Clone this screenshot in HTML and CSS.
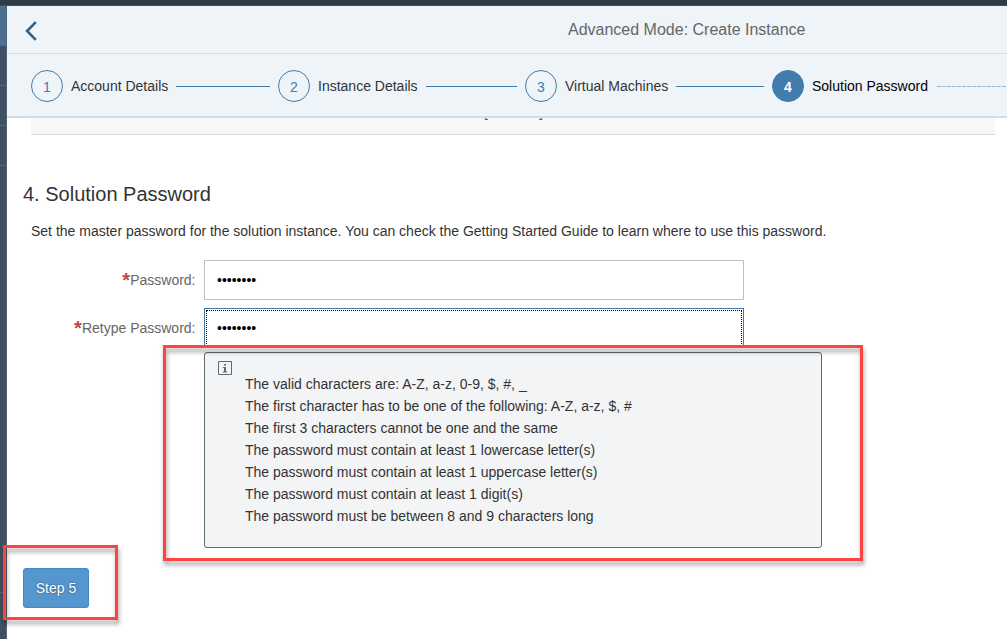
FILE: index.html
```html
<!DOCTYPE html>
<html lang="en">
<head>
<meta charset="utf-8">
<title>Advanced Mode: Create Instance</title>
<link rel="stylesheet" href="styles.css">
</head>
<body>
<div class="shell-bar"></div>
<div class="shell">
  <nav class="side">
    <div class="side-item active"></div>
    <div class="side-item"></div>
    <div class="side-item"></div>
    <div class="side-item"></div>
    <div class="side-space"></div>
    <div class="side-item last"></div>
  </nav>
  <main class="page">
    <header class="page-header">
      <svg class="back" width="14" height="20" viewBox="0 0 14 20"><path d="M11.8 1.2 3.1 10l8.7 8.8" fill="none" stroke="#346187" stroke-width="2.6"/></svg>
      <h1>Advanced Mode: Create Instance</h1>
    </header>
    <ol class="steps">
      <li class="step"><span class="num">1</span><span class="name">Account Details</span><span class="line"></span></li>
      <li class="step"><span class="num">2</span><span class="name">Instance Details</span><span class="line"></span></li>
      <li class="step"><span class="num">3</span><span class="name">Virtual Machines</span><span class="line"></span></li>
      <li class="step current"><span class="num">4</span><span class="name">Solution Password</span><span class="line"></span></li>
    </ol>
    <div class="strip"><span>[</span><span>]</span></div>
    <section class="content">
      <h2>4. Solution Password</h2>
      <p class="intro">Set the master password for the solution instance. You can check the Getting Started Guide to learn where to use this password.</p>
      <div class="row"><label><b>*</b>Password:</label><div class="field">••••••••</div></div>
      <div class="row"><label><b>*</b>Retype Password:</label><div class="field focus">••••••••</div></div>
      <div class="info">
        <svg class="info-icon" width="14" height="14" viewBox="0 0 14 14"><path d="M.5.5h13v13H.5z" fill="none" stroke="#5d6a70"/><path d="M6 3h2v1.6H6zM5 6h3v4.4h1.2v1.1H4.8v-1.1H6V7H5z" fill="#5d6a70"/></svg>
        <ul>
          <li>The valid characters are: A-Z, a-z, 0-9, $, #, _</li>
          <li>The first character has to be one of the following: A-Z, a-z, $, #</li>
          <li>The first 3 characters cannot be one and the same</li>
          <li>The password must contain at least 1 lowercase letter(s)</li>
          <li>The password must contain at least 1 uppercase letter(s)</li>
          <li>The password must contain at least 1 digit(s)</li>
          <li>The password must be between 8 and 9 characters long</li>
        </ul>
      </div>
      <button class="next">Step 5</button>
    </section>
  </main>
</div>
<div class="mark mark-info"></div>
<div class="mark mark-next"></div>
</body>
</html>
```

FILE: styles.css
```css
* { box-sizing: border-box; }
body {
  margin: 0;
  width: 1007px;
  height: 639px;
  overflow: hidden;
  position: relative;
  background: #fff;
  font: 14px/20px "Liberation Sans", Arial, sans-serif;
  color: #333;
}
h1, h2, p, ol, ul { margin: 0; padding: 0; font-weight: normal; list-style: none; }
.shell-bar { height: 6px; background: #2f3c48; border-bottom: 1px solid #434b5e; }
.shell { display: flex; height: 633px; }
.side {
  width: 7px;
  display: flex;
  flex-direction: column;
  background: #41505f;
  border-right: 1px solid #4c6681;
}
.side-item { height: 40px; border-bottom: 1px solid #596673; }
.side-item.active { background: #4a6f90; }
.side-space { height: 427px; border-bottom: 1px solid #596673; }
.side-item.last { border: 0; flex: 1; }
.page { flex: 1; min-width: 0; display: flex; flex-direction: column; }
.page-header {
  height: 48px;
  display: flex;
  align-items: center;
  padding-left: 17px;
  background: #eff4f9;
  border-bottom: 1px solid #cddeed;
}
.back { display: block; margin-top: 2px; }
.page-header h1 { margin-left: 530px; font-size: 16px; color: #666; }
.steps {
  display: flex;
  height: 64px;
  align-items: center;
  padding: 2px 0 0 24px;
  background: #eff4f9;
  border-bottom: 2px solid #cddeed;
}
.step { width: 247px; flex: none; display: flex; align-items: center; }
.num {
  width: 32px;
  height: 32px;
  border: 1px solid #427cac;
  border-radius: 50%;
  color: #427cac;
  text-align: center;
  line-height: 32px;
}
.name { margin: 0 8px; }
.line { flex: 1; height: 1px; margin-right: 8px; margin-top: 1px; background: #427cac; }
.current .num { background: #427cac; color: #fff; font-weight: bold; }
.current .name { color: #000; }
.current .line { margin-left: 1px; background: repeating-linear-gradient(90deg, #91b8d8 0 4px, transparent 4px 5px); }
.strip {
  height: 17px;
  margin: 0 12px 0 24px;
  display: flex;
  justify-content: space-between;
  padding: 0 452px 0 453px;
  background: #f7f7f7;
  border-bottom: 1px solid #d9d9d9;
  color: #346187;
  line-height: 14px;
  overflow: hidden;
}
.strip span { margin-top: -13px; }
.content { padding: 47px 16px 0; }
h2 { font-size: 20px; line-height: 24px; }
.intro { margin: 15px 0 19px 8px; white-space: nowrap; }
.row { display: flex; align-items: center; height: 40px; margin-bottom: 8px; }
.row label { width: 172.5px; margin-right: 8.5px; text-align: right; color: #666; white-space: nowrap; }
.row b { color: #c14646; font-size: 20px; font-weight: bold; line-height: 16px; vertical-align: -2px; }
.field {
  width: 540px;
  height: 40px;
  border: 1px solid #bfbfbf;
  background: #fff;
  color: #000;
  padding-left: 12px;
  line-height: 38px;
}
.field.focus { border-color: #427cac; outline: 1px dotted #000; outline-offset: -3px; }
.info {
  width: 618px;
  height: 196px;
  margin: -4px 0 20px 181px;
  display: flex;
  padding: 8px 13px;
  background: #f3f4f6;
  border: 1px solid #5d6a70;
  border-radius: 3px;
}
.info-icon { flex: none; }
.info ul { margin: 12px 0 0 13px; }
.info li { line-height: 22px; white-space: nowrap; }
.next {
  display: block;
  width: 66px;
  height: 40px;
  padding: 0;
  background: #5496cd;
  border: 1px solid #418ac7;
  border-radius: 3px;
  color: #fff;
  font: inherit;
  text-shadow: 0 0 2px rgba(0, 0, 0, .5);
}
.mark { position: absolute; border: 3px solid #ff4343; filter: drop-shadow(1px 4px 2px rgba(0, 0, 0, .38)); }
.mark-info { left: 163px; top: 345px; width: 700px; height: 216px; }
.mark-next { left: 3px; top: 545px; width: 115px; height: 75px; }
```
